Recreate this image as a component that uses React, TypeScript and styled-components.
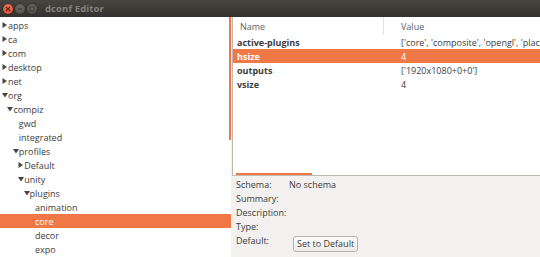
import React from "react";
import styled, { createGlobalStyle } from "styled-components";

const GlobalStyle = createGlobalStyle`
  html, body { margin: 0; padding: 0; background: #f2f1f0; }
  body { font-family: "Open Sans", "DejaVu Sans", sans-serif; font-size: 9px; color: #3c3c3c; }
  * { box-sizing: border-box; }
`;

const ORANGE = "#f07746";

const Window = styled.div`
  width: 540px;
  height: 257px;
  display: flex;
  flex-direction: column;
  overflow: hidden;
  background: #f2f1f0;
`;

const TitleBar = styled.div`
  height: 17px;
  flex: none;
  display: flex;
  align-items: center;
  padding-left: 3px;
  background: linear-gradient(#46453f, #33322e);
`;

const WinButton = styled.div<{ $kind: "close" | "min" | "max" }>`
  width: 10px;
  height: 10px;
  border-radius: 50%;
  margin-right: 2px;
  display: flex;
  align-items: center;
  justify-content: center;
  background: ${(p) =>
    p.$kind === "close"
      ? "radial-gradient(circle at 50% 35%, #f07a5c, #d8452a)"
      : "radial-gradient(circle at 50% 35%, #6c6b66, #4a4944)"};
  box-shadow: 0 0 0 0.5px #2a2926;
`;

const TitleText = styled.span`
  margin-left: 6px;
  font-size: 9.5px;
  font-weight: 700;
  color: #85837c;
  letter-spacing: 0.1px;
`;

const Body = styled.div`
  flex: 1;
  display: flex;
  min-height: 0;
`;

const LeftPane = styled.div`
  position: relative;
  width: 231px;
  flex: none;
  background: #ffffff;
  padding-top: 1px;
  overflow: hidden;
`;

const VScrollIndicator = styled.div`
  position: absolute;
  right: 0;
  top: 0;
  width: 2px;
  height: 123px;
  background: ${ORANGE};
`;

const TreeRow = styled.div<{ $level: number; $selected?: boolean }>`
  height: 14px;
  display: flex;
  align-items: center;
  padding-left: ${(p) => 2 + p.$level * 5.4}px;
  background: ${(p) => (p.$selected ? ORANGE : "transparent")};
  color: ${(p) => (p.$selected ? "#ffffff" : "#3c3c3c")};
  white-space: nowrap;
`;

const Expander = styled.span`
  width: 6px;
  height: 14px;
  flex: none;
  display: flex;
  align-items: center;
`;

const RightPanel = styled.div`
  flex: 1;
  display: flex;
  flex-direction: column;
  min-width: 0;
  background: #f2f1f0;
`;

const ListFrame = styled.div`
  position: relative;
  height: 159px;
  margin-left: 1px;
  flex: none;
  background: #ffffff;
  border-left: 1px solid #bdb9b3;
  border-bottom: 1px solid #bdb9b3;
  overflow: hidden;
`;

const HScrollIndicator = styled.div`
  position: absolute;
  left: 3px;
  bottom: 0;
  width: 76px;
  height: 2px;
  background: ${ORANGE};
`;

const HeaderRow = styled.div`
  height: 18px;
  display: grid;
  grid-template-columns: 151px 1fr;
  align-items: stretch;
  color: #5e5e5e;
`;

const HeaderCell = styled.div<{ $pad: number; $sep?: boolean }>`
  display: flex;
  align-items: center;
  padding-left: ${(p) => p.$pad}px;
  border-right: ${(p) => (p.$sep ? "1px solid #e4e2df" : "none")};
`;

const DataRow = styled.div<{ $selected?: boolean }>`
  height: 14px;
  display: grid;
  grid-template-columns: 164px 1fr;
  align-items: center;
  background: ${(p) => (p.$selected ? ORANGE : "transparent")};
  color: ${(p) => (p.$selected ? "#ffffff" : "#3c3c3c")};
`;

const NameCell = styled.div`
  padding-left: 4px;
  font-weight: 700;
  white-space: nowrap;
`;

const ValueCell = styled.div`
  padding-left: 4px;
  white-space: nowrap;
  overflow: hidden;
`;

const InfoGrid = styled.div`
  display: grid;
  grid-template-columns: 53px 1fr;
  grid-auto-rows: 14px;
  padding: 2px 0 0 5px;
  color: #3c3c3c;
`;

const InfoLabel = styled.div`
  line-height: 14px;
  white-space: nowrap;
`;

const InfoValue = styled.div`
  line-height: 14px;
  white-space: nowrap;
`;

const ButtonCell = styled.div`
  padding-top: 2px;
  padding-left: 4px;
`;

const DefaultButton = styled.button`
  height: 16px;
  padding: 0 3px;
  font-family: inherit;
  font-size: 9px;
  color: #3c3c3c;
  border: 1px solid #b8b4ad;
  border-radius: 3px;
  background: linear-gradient(#fdfdfc, #ecebe9);
  line-height: 14px;
  cursor: default;
`;

const Triangle: React.FC<{ open: boolean; color: string }> = ({ open, color }) =>
  open ? (
    <svg width="6" height="6" viewBox="0 0 6 6">
      <polygon points="0,1 6,1 3,5.5" fill={color} />
    </svg>
  ) : (
    <svg width="6" height="6" viewBox="0 0 6 6">
      <polygon points="0.5,0 5,3 0.5,6" fill={color} />
    </svg>
  );

type Node = { label: string; level: number; exp?: "open" | "closed"; selected?: boolean };

const tree: Node[] = [
  { label: "apps", level: 0, exp: "closed" },
  { label: "ca", level: 0, exp: "closed" },
  { label: "com", level: 0, exp: "closed" },
  { label: "desktop", level: 0, exp: "closed" },
  { label: "net", level: 0, exp: "closed" },
  { label: "org", level: 0, exp: "open" },
  { label: "compiz", level: 1, exp: "open" },
  { label: "gwd", level: 2 },
  { label: "integrated", level: 2 },
  { label: "profiles", level: 2, exp: "open" },
  { label: "Default", level: 3, exp: "closed" },
  { label: "unity", level: 3, exp: "open" },
  { label: "plugins", level: 4, exp: "open" },
  { label: "animation", level: 5 },
  { label: "core", level: 5, selected: true },
  { label: "decor", level: 5 },
  { label: "expo", level: 5 },
];

const keys = [
  {
    name: "active-plugins",
    value:
      "['core', 'composite', 'opengl', 'place', 'move', 'resize', 'grid', 'vpswitch', 'snap']",
  },
  { name: "hsize", value: "4", selected: true },
  { name: "outputs", value: "['1920x1080+0+0']" },
  { name: "vsize", value: "4" },
];

export default function App() {
  return (
    <>
      <GlobalStyle />
      <Window>
        <TitleBar>
          <WinButton $kind="close">
            <svg width="6" height="6" viewBox="0 0 6 6">
              <path d="M1 1 L5 5 M5 1 L1 5" stroke="#5a1e12" strokeWidth="1.2" />
            </svg>
          </WinButton>
          <WinButton $kind="min">
            <svg width="6" height="6" viewBox="0 0 6 6">
              <path d="M1 3 H5" stroke="#38372f" strokeWidth="1.2" />
            </svg>
          </WinButton>
          <WinButton $kind="max">
            <svg width="6" height="6" viewBox="0 0 6 6">
              <rect x="1" y="1" width="4" height="4" fill="none" stroke="#38372f" strokeWidth="1" />
            </svg>
          </WinButton>
          <TitleText>dconf Editor</TitleText>
        </TitleBar>
        <Body>
          <LeftPane>
            {tree.map((n) => (
              <TreeRow key={n.label} $level={n.level} $selected={n.selected}>
                <Expander>
                  {n.exp && (
                    <Triangle open={n.exp === "open"} color={n.selected ? "#fff" : "#454545"} />
                  )}
                </Expander>
                {n.label}
              </TreeRow>
            ))}
            <VScrollIndicator />
          </LeftPane>
          <RightPanel>
            <ListFrame>
              <HeaderRow>
                <HeaderCell $pad={7} $sep>
                  Name
                </HeaderCell>
                <HeaderCell $pad={17}>Value</HeaderCell>
              </HeaderRow>
              {keys.map((k) => (
                <DataRow key={k.name} $selected={k.selected}>
                  <NameCell>{k.name}</NameCell>
                  <ValueCell>{k.value}</ValueCell>
                </DataRow>
              ))}
              <HScrollIndicator />
            </ListFrame>
            <InfoGrid>
              <InfoLabel>Schema:</InfoLabel>
              <InfoValue>No schema</InfoValue>
              <InfoLabel>Summary:</InfoLabel>
              <InfoValue />
              <InfoLabel>Description:</InfoLabel>
              <InfoValue />
              <InfoLabel>Type:</InfoLabel>
              <InfoValue />
              <InfoLabel>Default:</InfoLabel>
              <ButtonCell>
                <DefaultButton>Set to Default</DefaultButton>
              </ButtonCell>
            </InfoGrid>
          </RightPanel>
        </Body>
      </Window>
    </>
  );
}
